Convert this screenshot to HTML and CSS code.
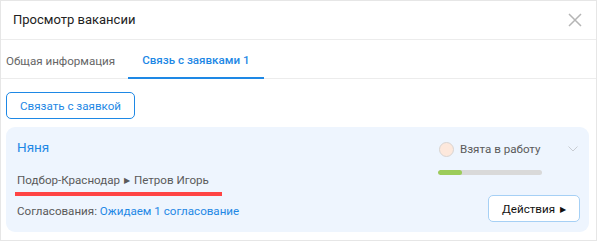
FILE: index.html
```html
<!DOCTYPE html>
<html lang="ru">
<head>
<meta charset="utf-8">
<link rel="stylesheet" href="styles.css">
</head>
<body>
<div class="modal">
  <div class="header">
    <span class="title">Просмотр вакансии</span>
    <svg class="close" width="14" height="14" viewBox="0 0 14 14"><path d="M1 1L13 13M13 1L1 13" stroke="#b5b5b5" stroke-width="1.5" fill="none"/></svg>
  </div>
  <div class="tabs">
    <div class="tab">Общая информация</div>
    <div class="tab active">Связь с заявками 1</div>
  </div>
  <div class="content">
    <button class="link-btn">Связать с заявкой</button>
    <div class="card">
      <div class="card-left">
        <div class="name">Няня</div>
        <div class="path">Подбор-Краснодар <span class="tri">&#9654;</span> Петров Игорь</div>
        <div class="underline"></div>
        <div class="approvals">Согласования: <span class="blue">Ожидаем 1 согласование</span></div>
      </div>
      <div class="card-right">
        <div class="status-row">
          <span class="dot"></span>
          <span class="status">Взята в работу</span>
          <svg class="chev" width="10" height="6" viewBox="0 0 10 6"><path d="M0.5 0.5L5 5L9.5 0.5" stroke="#c8ccd2" stroke-width="1" fill="none"/></svg>
        </div>
        <div class="progress"><div class="fill" style="width:23%"></div></div>
        <button class="actions">Действия <span class="tri2">&#9654;</span></button>
      </div>
    </div>
  </div>
</div>
</body>
</html>
```

FILE: styles.css
```css
html, body {
  margin: 0;
  padding: 0;
  background: #fff;
}
body {
  font-family: Roboto, "Liberation Sans", sans-serif;
}
.modal {
  width: 597px;
  height: 241px;
  box-sizing: border-box;
  border: 1px solid #e6e6e6;
  background: #fff;
}
.header {
  height: 38px;
  border-bottom: 1px solid #ececec;
  display: flex;
  align-items: center;
  justify-content: space-between;
  padding: 0 14px 0 12px;
}
.title {
  font-size: 13px;
  color: #222;
  margin-top: -2px;
}
.close {
  margin-top: -1px;
}
.tabs {
  display: flex;
  height: 38px;
  border-bottom: 1px solid #ececec;
}
.tab {
  font-size: 11.6px;
  color: #666;
  padding: 2px 13px 0 5px;
  line-height: 38px;
  box-sizing: border-box;
  height: 38px;
}
.tab.active {
  color: #1e88e5;
  font-weight: 500;
  padding: 4px 14px 0;
  line-height: 33px;
  border-bottom: 2px solid #1e88e5;
  height: 39px;
}
.content {
  padding: 13px 7px 0 5px;
}
.link-btn {
  font-family: inherit;
  font-size: 11.6px;
  color: #1e88e5;
  background: #fff;
  border: 1px solid #1e88e5;
  border-radius: 5px;
  height: 27px;
  width: 129px;
  padding: 0;
  display: block;
}
.card {
  margin-top: 8px;
  background: #eef5fe;
  border-radius: 9px;
  height: 105px;
  display: flex;
  justify-content: space-between;
  padding: 0 10px 0 11px;
  box-sizing: border-box;
}
.card-left {
  padding-top: 11px;
}
.name {
  font-size: 13.5px;
  color: #1e88e5;
  line-height: 18px;
}
.path {
  font-size: 11.6px;
  color: #5a5a5a;
  margin-top: 16px;
  line-height: 16px;
}
.tri {
  font-size: 8px;
  vertical-align: 1px;
  margin: 0 1px;
}
.underline {
  width: 207px;
  height: 4px;
  background: #ff4444;
  margin-left: -2px;
  margin-top: 3px;
}
.approvals {
  font-size: 11.6px;
  color: #5a5a5a;
  margin-top: 7px;
  line-height: 16px;
}
.blue {
  color: #1e88e5;
}
.card-right {
  width: 141px;
  padding-top: 14px;
  display: flex;
  flex-direction: column;
}
.status-row {
  display: flex;
  align-items: center;
  height: 16px;
}
.dot {
  width: 13px;
  height: 13px;
  border-radius: 50%;
  background: #fde8dc;
  border: 1px solid #d8d4d2;
  margin-left: 1px;
}
.status {
  font-size: 11.6px;
  color: #5a5a5a;
  margin-left: 6px;
}
.chev {
  margin-left: auto;
  margin-right: 1px;
}
.progress {
  width: 104px;
  height: 5px;
  background: #d9d9d9;
  border-radius: 3px;
  margin-top: 13px;
  overflow: hidden;
}
.fill {
  height: 100%;
  background: #9ccc5a;
  border-radius: 3px;
}
.actions {
  font-family: inherit;
  font-size: 11.6px;
  color: #111;
  background: #fff;
  border: 1px solid #a6d0f5;
  border-radius: 5px;
  height: 27px;
  width: 92px;
  margin-top: 20px;
  margin-left: 50px;
  padding: 0;
}
.tri2 {
  font-size: 8px;
  vertical-align: 1px;
  margin-left: 2px;
}
```
